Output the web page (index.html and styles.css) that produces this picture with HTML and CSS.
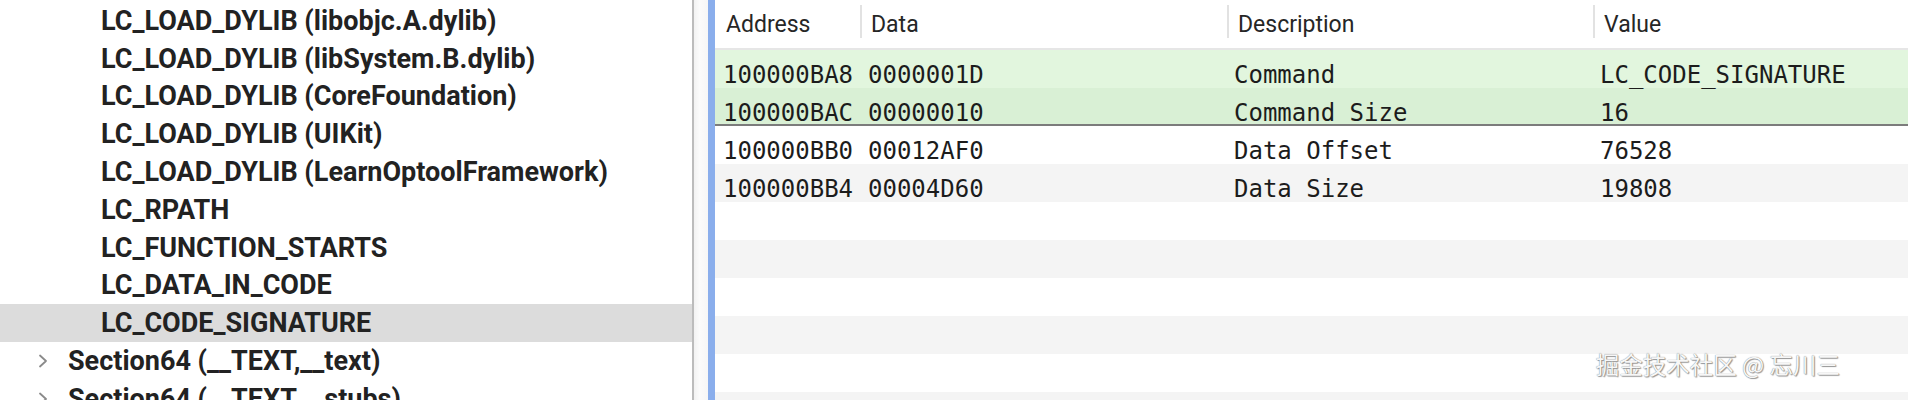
FILE: index.html
```html
<!DOCTYPE html>
<html>
<head>
<meta charset="utf-8">
<link rel="stylesheet" href="styles.css">
</head>
<body>
<div class="app">
  <div class="tree">
    <div class="node lvl2">LC_LOAD_DYLIB (libobjc.A.dylib)</div>
    <div class="node lvl2">LC_LOAD_DYLIB (libSystem.B.dylib)</div>
    <div class="node lvl2">LC_LOAD_DYLIB (CoreFoundation)</div>
    <div class="node lvl2">LC_LOAD_DYLIB (UIKit)</div>
    <div class="node lvl2">LC_LOAD_DYLIB (LearnOptoolFramework)</div>
    <div class="node lvl2">LC_RPATH</div>
    <div class="node lvl2">LC_FUNCTION_STARTS</div>
    <div class="node lvl2">LC_DATA_IN_CODE</div>
    <div class="node lvl2 selected">LC_CODE_SIGNATURE</div>
    <div class="node lvl1"><svg class="chev" viewBox="0 0 10 14" width="10" height="14"><path d="M2 1.5 L8 7 L2 12.5" fill="none" stroke="#8a8a8a" stroke-width="1.8" stroke-linecap="round" stroke-linejoin="round"/></svg><span>Section64 (__TEXT,__text)</span></div>
    <div class="node lvl1"><svg class="chev" viewBox="0 0 10 14" width="10" height="14"><path d="M2 1.5 L8 7 L2 12.5" fill="none" stroke="#8a8a8a" stroke-width="1.8" stroke-linecap="round" stroke-linejoin="round"/></svg><span>Section64 (__TEXT,__stubs)</span></div>
  </div>
  <div class="splitter"></div>
  <div class="focusbar"></div>
  <div class="table">
    <div class="thead">
      <div class="th c-addr">Address</div>
      <div class="th c-data sep">Data</div>
      <div class="th c-desc sep">Description</div>
      <div class="th c-val sep">Value</div>
    </div>
    <div class="tbody">
      <div class="tr hl">
        <div class="td c-addr">100000BA8</div><div class="td c-data">0000001D</div><div class="td c-desc">Command</div><div class="td c-val">LC_CODE_SIGNATURE</div>
      </div>
      <div class="tr hl odd last-hl">
        <div class="td c-addr">100000BAC</div><div class="td c-data">00000010</div><div class="td c-desc">Command Size</div><div class="td c-val">16</div>
      </div>
      <div class="tr">
        <div class="td c-addr">100000BB0</div><div class="td c-data">00012AF0</div><div class="td c-desc">Data Offset</div><div class="td c-val">76528</div>
      </div>
      <div class="tr odd">
        <div class="td c-addr">100000BB4</div><div class="td c-data">00004D60</div><div class="td c-desc">Data Size</div><div class="td c-val">19808</div>
      </div>
      <div class="tr"></div>
      <div class="tr odd"></div>
      <div class="tr"></div>
      <div class="tr odd"></div>
      <div class="tr"></div>
      <div class="tr odd"></div>
    </div>
  </div>
</div>
<div class="watermark">掘金技术社区 @ 忘川三</div>
</body>
</html>
```
FILE: styles.css
```css
html, body {
  margin: 0;
  padding: 0;
  background: #ffffff;
  overflow: hidden;
}
body {
  width: 1908px;
  height: 400px;
  position: relative;
}
.app {
  display: flex;
  height: 400px;
  overflow: hidden;
}
.tree {
  width: 692px;
  flex: none;
  padding-top: 2px;
  background: #ffffff;
  border-right: 2px solid #bcbcbc;
  font-family: Roboto, "Liberation Sans", sans-serif;
  font-weight: 700;
  font-size: 27px;
  color: #222222;
}
.node {
  height: 37.8px;
  display: flex;
  align-items: center;
  white-space: nowrap;
}
.node.lvl2 { padding-left: 101px; }
.node.lvl1 { padding-left: 38px; }
.node.lvl1 .chev { margin-right: 20px; flex: none; }
.node.selected { background: #dcdcdc; }
.splitter {
  width: 14px;
  flex: none;
  background: linear-gradient(to right, #f2f2f2, #fbfbfb 40%, #f6f6f6);
}
.focusbar {
  width: 7px;
  flex: none;
  background: #8aaeec;
}
.table {
  flex: 1;
  min-width: 0;
}
.thead {
  height: 48px;
  display: flex;
  border-bottom: 2px solid #e6e6e6;
  font-family: Roboto, "Liberation Sans", sans-serif;
  font-size: 23px;
  color: #262626;
}
.th {
  display: flex;
  align-items: center;
  padding-left: 11px;
  box-sizing: border-box;
  position: relative;
}
.th.sep::before {
  content: "";
  position: absolute;
  left: 0;
  top: 5px;
  bottom: 10px;
  width: 2px;
  background: #e2e2e2;
}
.c-addr { width: 145px; flex: none; }
.c-data { width: 367px; flex: none; }
.c-desc { width: 366px; flex: none; }
.c-val { flex: 1; }
.td.c-addr { padding-left: 8px; }
.td.c-data { padding-left: 8px; }
.td.c-desc { padding-left: 7px; }
.td.c-val { padding-left: 7px; }
.tr {
  height: 38px;
  display: flex;
  align-items: center;
  background: #ffffff;
  font-family: "DejaVu Sans Mono", monospace;
  font-size: 24px;
  color: #1c1c1c;
  white-space: nowrap;
}
.td {
  box-sizing: border-box;
  padding-top: 11px;
}
.tr.odd { background: #f4f4f4; }
.tr.hl { background: #e2f6de; }
.tr.hl.odd { background: #d9f0d5; }
.tr.last-hl { box-shadow: inset 0 -2px 0 #7c7c7c; }
.watermark {
  position: absolute;
  right: 68px;
  top: 348px;
  font-family: "Noto Sans CJK SC", sans-serif;
  font-size: 23.5px;
  line-height: 32px;
  color: #f7f7f7;
  text-shadow: 0 0 1px #6a6a6a, 1px 1px 1px #9a9a9a;
  white-space: nowrap;
}
```
